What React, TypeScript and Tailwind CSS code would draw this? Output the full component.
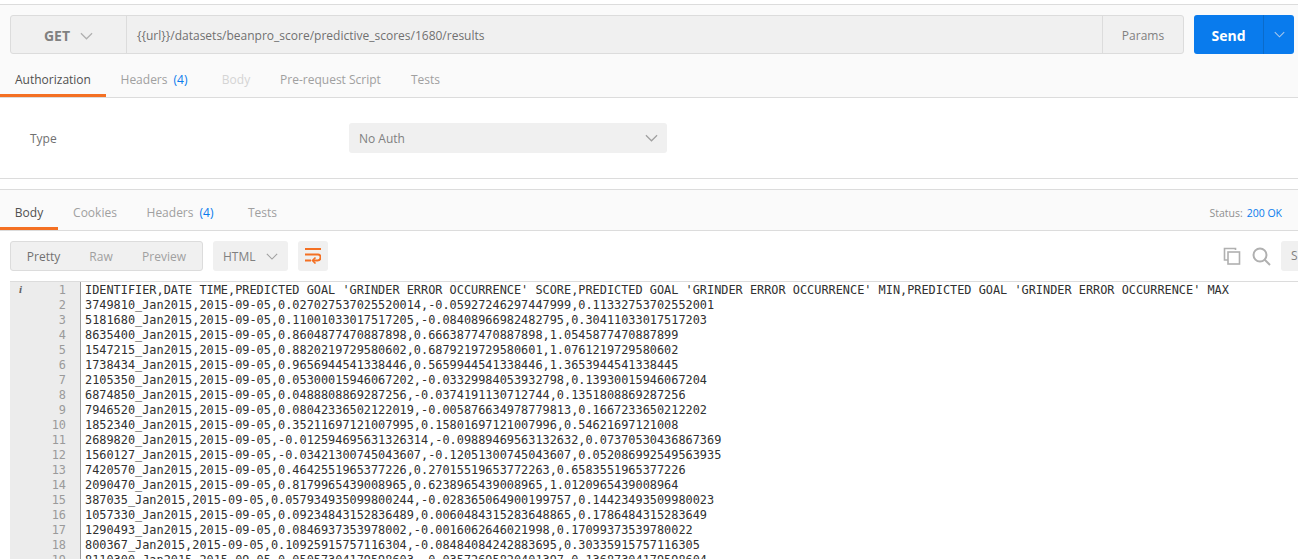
import React from "react";

const lines = [
  "IDENTIFIER,DATE TIME,PREDICTED GOAL 'GRINDER ERROR OCCURRENCE' SCORE,PREDICTED GOAL 'GRINDER ERROR OCCURRENCE' MIN,PREDICTED GOAL 'GRINDER ERROR OCCURRENCE' MAX",
  "3749810_Jan2015,2015-09-05,0.027027537025520014,-0.05927246297447999,0.11332753702552001",
  "5181680_Jan2015,2015-09-05,0.11001033017517205,-0.08408966982482795,0.30411033017517203",
  "8635400_Jan2015,2015-09-05,0.8604877470887898,0.6663877470887898,1.0545877470887899",
  "1547215_Jan2015,2015-09-05,0.8820219729580602,0.6879219729580601,1.0761219729580602",
  "1738434_Jan2015,2015-09-05,0.9656944541338446,0.5659944541338446,1.3653944541338445",
  "2105350_Jan2015,2015-09-05,0.05300015946067202,-0.03329984053932798,0.13930015946067204",
  "6874850_Jan2015,2015-09-05,0.0488808869287256,-0.0374191130712744,0.1351808869287256",
  "7946520_Jan2015,2015-09-05,0.08042336502122019,-0.005876634978779813,0.1667233650212202",
  "1852340_Jan2015,2015-09-05,0.35211697121007995,0.15801697121007996,0.54621697121008",
  "2689820_Jan2015,2015-09-05,-0.012594695631326314,-0.09889469563132632,0.07370530436867369",
  "1560127_Jan2015,2015-09-05,-0.03421300745043607,-0.12051300745043607,0.05208699254956393 5",
  "7420570_Jan2015,2015-09-05,0.4642551965377226,0.27015519653772263,0.6583551965377226",
  "2090470_Jan2015,2015-09-05,0.8179965439008965,0.6238965439008965,1.0120965439008964",
  "387035_Jan2015,2015-09-05,0.057934935099800244,-0.028365064900199757,0.14423493509980023",
  "1057330_Jan2015,2015-09-05,0.09234843152836489,0.0060484315283648865,0.1786484315283649",
  "1290493_Jan2015,2015-09-05,0.0846937353978002,-0.0016062646021998,0.17099373539780022",
  "800367_Jan2015,2015-09-05,0.10925915757116304,-0.08484084242883695,0.30335915757116305",
  "8110300_Jan2015,2015-09-05,0.05057304179598603,-0.03572695820401397,0.13687304179598604",
].map((l) => l.replace(/(\d) (\d)/g, "$1$2"));

function Chevron({ className }: { className: string }) {
  return (
    <svg className={className} viewBox="0 0 14 8" fill="none" stroke="currentColor" strokeWidth="1.3">
      <path d="M1 1l6 6 6-6" />
    </svg>
  );
}

function Tab({ children, active, dim, pad }: { children: React.ReactNode; active?: boolean; dim?: boolean; pad: string }) {
  return (
    <div
      className={`flex items-center justify-center h-full border-b-[3px] ${pad} ${active ? "border-[#f47023] text-[#505050]" : "border-transparent"} ${dim ? "text-[#d4d4d4]" : active ? "" : "text-[#a0a0a0]"}`}
    >
      {children}
    </div>
  );
}

function Count() {
  return <span className="text-[#097bed] ml-[6px]">(4)</span>;
}

export default function App() {
  return (
    <div className="w-[1298px] h-[559px] overflow-hidden bg-white text-[12px] font-['Open_Sans','Noto_Sans',sans-serif]">
      <div className="h-[4px]" />
      <section className="h-[94px] bg-[#fafafa] border-y border-[#dcdcdc] flex flex-col">
        <div className="flex h-[39px] mt-[10px] pl-[10px] pr-[4px] gap-[10px]">
          <div className="flex flex-1 bg-[#f0f0f0] border border-[#dcdcdc] rounded-[3px] text-[#505050]">
            <div className="w-[116px] flex items-center justify-center gap-[10px] border-r border-[#dcdcdc] text-[#808080] font-bold text-[14px] pt-[2px]">
              <span>GET</span>
              <Chevron className="w-[13px] h-[8px] text-[#b0b0b0]" />
            </div>
            <div className="flex-1 flex items-center pl-[10px] text-[#707070] pt-[2px]">
              {"{{url}}/datasets/beanpro_score/predictive_scores/1680/results"}
            </div>
            <div className="w-[81px] flex items-center justify-center border-l border-[#dcdcdc] text-[#808080] pt-[3px]">Params</div>
          </div>
          <div className="flex w-[100px] bg-[#097bed] rounded-[3px] text-white">
            <div className="w-[69px] flex items-center justify-center font-bold text-[14px] pt-[2px]">Send</div>
            <div className="flex-1 flex items-center justify-center border-l border-[#0a6bcb]">
              <Chevron className="w-[11px] h-[7px] text-[#a8c8ec]" />
            </div>
          </div>
        </div>
        <div className="flex-1 flex">
          <div className="w-[106px]"><Tab active pad="pt-[12px]">Authorization</Tab></div>
          <div className="w-[96px]"><Tab pad="pt-[12px]">Headers<Count /></Tab></div>
          <div className="w-[68px]"><Tab dim pad="pt-[12px]">Body</Tab></div>
          <div className="w-[121px]"><Tab pad="pt-[12px]">Pre-request Script</Tab></div>
          <div className="w-[69px]"><Tab pad="pt-[12px]">Tests</Tab></div>
        </div>
      </section>

      <section className="h-[81px] flex items-center border-b border-[#dcdcdc]">
        <div className="w-[349px] pl-[30px] pt-[2px] text-[#707070]">Type</div>
        <div className="w-[318px] h-[30px] bg-[#f0f0f0] rounded-[3px] flex items-center justify-between pl-[10px] pr-[9px] text-[#808080]">
          <span className="pt-[1px]">No Auth</span>
          <Chevron className="w-[13px] h-[8px] text-[#a0a0a0]" />
        </div>
      </section>

      <div className="h-[10px]" />

      <section className="h-[42px] bg-[#fafafa] border-y border-[#dcdcdc] flex justify-between pr-[16px]">
        <div className="flex h-full">
          <div className="w-[58px]"><Tab active pad="pt-[8px]">Body</Tab></div>
          <div className="w-[74px]"><Tab pad="pt-[8px]">Cookies</Tab></div>
          <div className="w-[96px]"><Tab pad="pt-[8px]">Headers<Count /></Tab></div>
          <div className="w-[69px]"><Tab pad="pt-[8px]">Tests</Tab></div>
        </div>
        <div className="flex items-center text-[10.5px] text-[#909090] gap-[4px] pt-[7px]">
          <span>Status:</span>
          <span className="text-[#097bed]">200 OK</span>
        </div>
      </section>

      <div className="h-[50px] flex items-center pl-[10px] gap-[10px]">
        <div className="w-[193px] h-[30px] bg-[#f0f0f0] border border-[#dcdcdc] rounded-[3px] flex items-center text-[#a0a0a0] pt-[2px]">
          <span className="w-[65px] text-center text-[#707070]">Pretty</span>
          <span className="w-[50px] text-center">Raw</span>
          <span className="w-[76px] text-center">Preview</span>
        </div>
        <div className="w-[75px] h-[30px] bg-[#f0f0f0] rounded-[3px] flex items-center gap-[10px] pl-[10px] text-[#808080]">
          <span className="pt-[2px]">HTML</span>
          <Chevron className="w-[12px] h-[7px] text-[#a0a0a0]" />
        </div>
        <div className="w-[30px] h-[30px] bg-[#f0f0f0] rounded-[3px] flex items-center justify-center">
          <svg className="w-[16px] h-[16px] text-[#f47023]" viewBox="0 0 16 16" fill="none" stroke="currentColor" strokeWidth="2">
            <path d="M0 1h16M0 6.5h13c3.5 0 3.5 6-.5 6H8" />
            <path d="M10.5 9.5L7.5 12.5L10.5 15.5" strokeWidth="1.6" />
            <path d="M0 12.5h6" />
          </svg>
        </div>
        <div className="ml-auto flex items-center text-[#b0b0b0]">
          <svg className="w-[18px] h-[18px]" viewBox="0 0 18 18" fill="none" stroke="currentColor" strokeWidth="1.6">
            <path d="M12.5 3V1.5H1.5V13H5" />
            <rect x="5" y="5" width="11.5" height="12" />
          </svg>
          <svg className="w-[19px] h-[19px] ml-[11px]" viewBox="0 0 19 19" fill="none" stroke="currentColor" strokeWidth="2">
            <circle cx="8" cy="8" r="6.5" />
            <path d="M12.5 12.5L18 18" />
          </svg>
          <div className="w-[17px] h-[30px] ml-[10px] bg-[#f0f0f0] rounded-l-[3px] flex items-center pl-[10px] text-[#808080]">S</div>
        </div>
      </div>

      <div className="flex border-t border-[#dcdcdc] ml-[10px] overflow-hidden">
        <div className="w-[71px] shrink-0 bg-[#ececec] border-r border-[#9a9a9a] relative h-[300px]">
          <span className="absolute left-[9px] top-[0px] leading-[15px] italic font-bold text-[11px] font-['Liberation_Serif',serif] text-[#606060]">i</span>
          <div className="font-['DejaVu_Sans_Mono',monospace] text-[11.88px] leading-[15px] text-[#9a9a9a] text-right pr-[14px] pt-[1px]">
            {lines.map((_, i) => (
              <div key={i}>{i + 1}</div>
            ))}
          </div>
        </div>
        <div className="pl-[4px] pt-[1px] font-['DejaVu_Sans_Mono',monospace] text-[11.88px] leading-[15px] text-[#303030] whitespace-pre">
          {lines.map((l, i) => (
            <div key={i}>{l}</div>
          ))}
        </div>
      </div>
    </div>
  );
}
